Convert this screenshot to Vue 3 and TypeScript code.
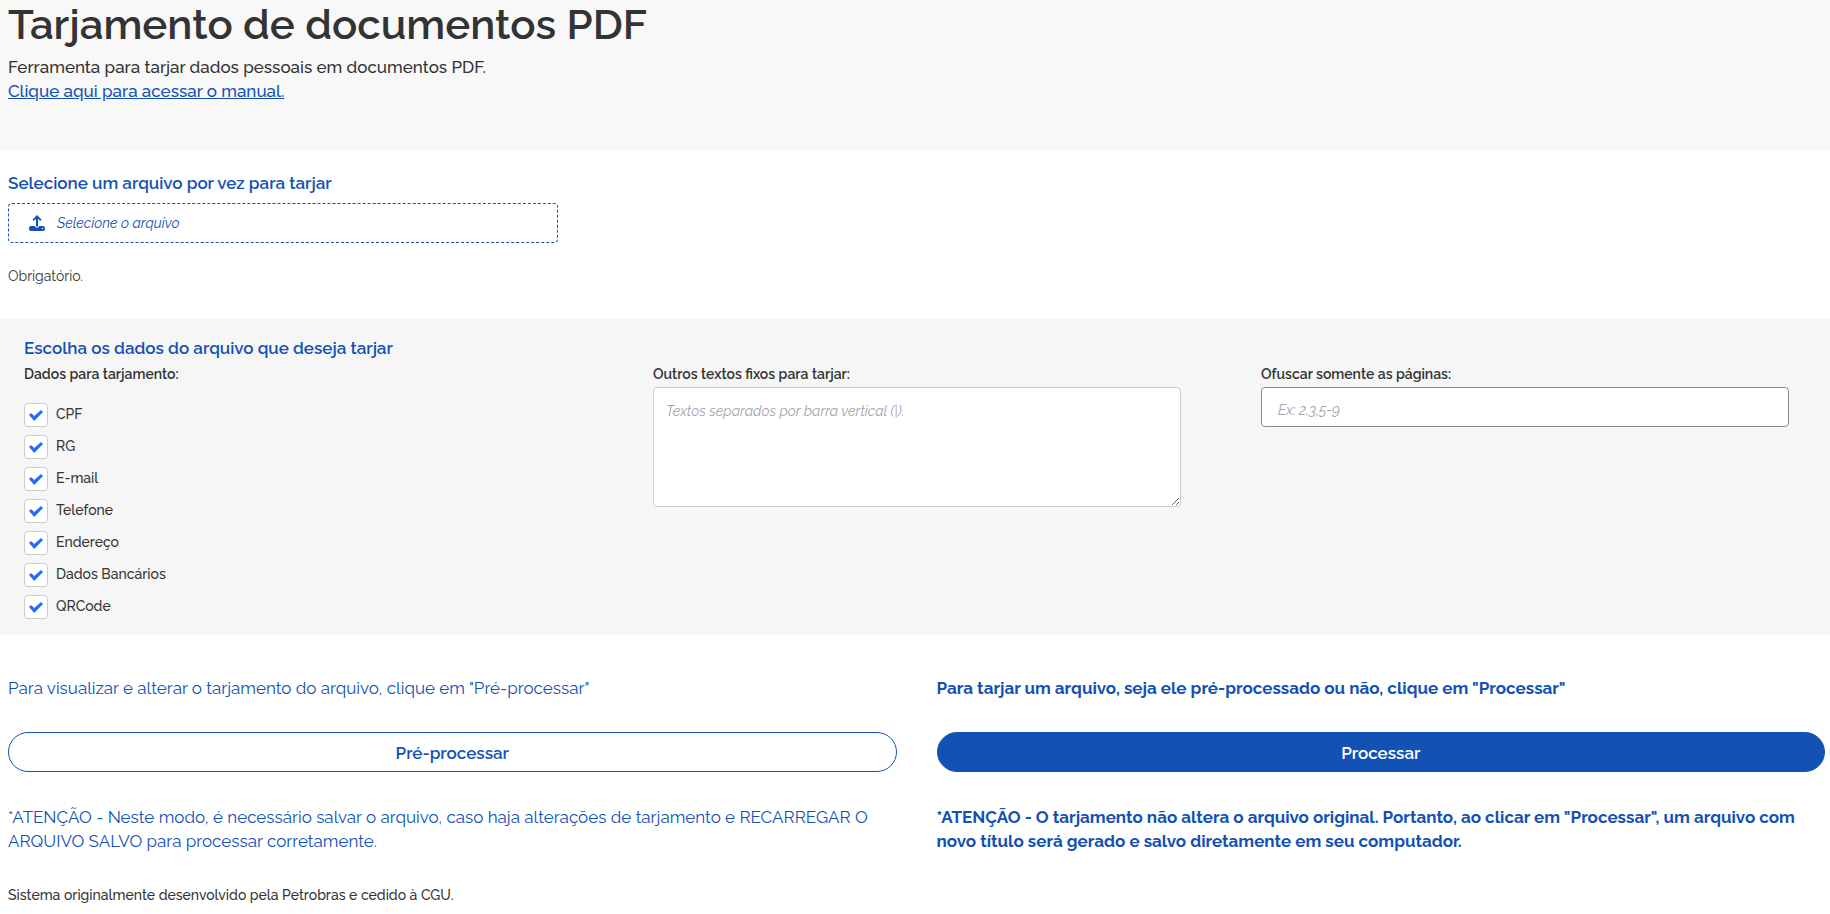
<script setup lang="ts">
import { ref } from 'vue'

interface Option {
  id: string
  label: string
}

const options: Option[] = [
  { id: 'cpf', label: 'CPF' },
  { id: 'rg', label: 'RG' },
  { id: 'email', label: 'E-mail' },
  { id: 'telefone', label: 'Telefone' },
  { id: 'endereco', label: 'Endereço' },
  { id: 'bancarios', label: 'Dados Bancários' },
  { id: 'qrcode', label: 'QRCode' },
]

const selected = ref<string[]>(options.map((o) => o.id))
const fixedTexts = ref('')
const pages = ref('')
const picker = ref<HTMLInputElement | null>(null)
</script>

<template>
  <main class="page">
    <header class="header">
      <h1>Tarjamento de documentos PDF</h1>
      <p>Ferramenta para tarjar dados pessoais em documentos PDF.</p>
      <p><a href="#manual">Clique aqui para acessar o manual.</a></p>
    </header>

    <section class="file">
      <h2 id="file-title">Selecione um arquivo por vez para tarjar</h2>
      <input ref="picker" type="file" accept="application/pdf" hidden />
      <button class="upload" type="button" aria-describedby="file-title" @click="picker?.click()">
        <svg viewBox="0 0 16 16" aria-hidden="true">
          <path d="M8 0 L12.5 4.5 L11.3 5.9 L9 3.8 V11.500 H7 V3.8 L4.7 5.9 L3.5 4.5 Z" />
          <path
            fill-rule="evenodd"
            d="M2 11 H5.8 A2.3 2.3 0 0 0 10.200 11 H14 A2 2 0 0 1 16 13 V14 A2 2 0 0 1 14 16 H2 A2 2 0 0 1 0 14 V13 A2 2 0 0 1 2 11 Z M13.500 12.800 A.7 .7 0 1 0 13.500 14.200 A.7 .7 0 1 0 13.500 12.800 Z"
          />
        </svg>
        <span>Selecione o arquivo</span>
      </button>
      <p class="hint">Obrigatório.</p>
    </section>

    <section class="data">
      <h2>Escolha os dados do arquivo que deseja tarjar</h2>
      <div class="columns">
        <fieldset class="column">
          <legend class="caption">Dados para tarjamento:</legend>
          <div class="options">
            <label v-for="o in options" :key="o.id" class="option">
              <input v-model="selected" type="checkbox" :value="o.id" />
              <svg class="tick" viewBox="0 0 14 11" aria-hidden="true">
                <path d="M0 5 L2 3 L5.300 6 L12 0 L14 2 L5.300 11 Z" />
              </svg>
              <span>{{ o.label }}</span>
            </label>
          </div>
        </fieldset>
        <div class="column">
          <label class="caption" for="texts">Outros textos fixos para tarjar:</label>
          <textarea
            id="texts"
            v-model="fixedTexts"
            placeholder="Textos separados por barra vertical (|)."
          ></textarea>
        </div>
        <div class="column">
          <label class="caption" for="pages">Ofuscar somente as páginas:</label>
          <input id="pages" v-model="pages" type="text" placeholder="Ex: 2,3,5-9" />
        </div>
      </div>
    </section>

    <section class="actions">
      <div class="action">
        <p>Para visualizar e alterar o tarjamento do arquivo, clique em "Pré-processar"</p>
        <button type="button">Pré-processar</button>
        <p>
          *ATENÇÃO - Neste modo, é necessário salvar o arquivo, caso haja alterações de tarjamento e
          RECARREGAR O ARQUIVO SALVO para processar corretamente.
        </p>
      </div>
      <div class="action primary">
        <p>Para tarjar um arquivo, seja ele pré-processado ou não, clique em "Processar"</p>
        <button type="button">Processar</button>
        <p>
          *ATENÇÃO - O tarjamento não altera o arquivo original. Portanto, ao clicar em "Processar",
          um arquivo com novo título será gerado e salvo diretamente em seu computador.
        </p>
      </div>
    </section>

    <footer class="footer">Sistema originalmente desenvolvido pela Petrobras e cedido à CGU.</footer>
  </main>
</template>

<style>
body {
  margin: 0;
  background: #fff;
}
</style>

<style scoped>
.page {
  --blue: #1351b4;
  color: #333;
  font-family: Raleway, Lato, 'Open Sans', sans-serif;
  font-size: 14px;
  font-weight: 500;
  line-height: 24px;
}

h1,
h2,
p {
  margin: 0;
}

h2 {
  color: var(--blue);
  font-size: 17px;
  font-weight: 600;
  line-height: 24px;
}

button,
input,
textarea {
  box-sizing: border-box;
  font-family: inherit;
  font-variant-numeric: lining-nums;
}

.header {
  padding: 0 8px 47px;
  background: #f8f8f8;
  font-size: 17px;
}

.header h1 {
  padding-bottom: 5px;
  font-size: 42px;
  font-weight: 600;
  line-height: 50px;
}

.header a {
  color: var(--blue);
}

.file {
  padding: 21px 8px 31px;
}

.upload {
  display: flex;
  align-items: center;
  gap: 12px;
  width: 550px;
  max-width: 100%;
  height: 40px;
  margin: 8px 0 21px;
  padding: 0 20px;
  border: 1px dashed var(--blue);
  border-radius: 4px;
  background: #fff;
  color: var(--blue);
  font-size: 14px;
  font-style: italic;
  font-weight: 400;
}

.upload svg {
  width: 16px;
  height: 16px;
  fill: currentColor;
}

.hint {
  font-weight: 400;
}

.data {
  padding: 17px 41px 16px 24px;
  background: #f6f6f6;
}

.columns {
  display: grid;
  grid-template-columns: 549fr 528fr 528fr;
  column-gap: 80px;
}

.column {
  display: flex;
  flex-direction: column;
  min-width: 0;
  margin: 0;
  padding: 0;
  border: 0;
}

.caption {
  padding: 2px 0 1px;
  font-weight: 600;
}

.options {
  display: flex;
  flex-direction: column;
  gap: 8px;
  padding-top: 16px;
}

.option {
  display: grid;
  grid-template-columns: 24px auto;
  justify-content: start;
  align-items: center;
  column-gap: 8px;
}

.option span {
  line-height: 22px;
  padding-bottom: 2px;
}

.option input,
.tick {
  grid-area: 1 / 1;
}

.option input {
  width: 24px;
  height: 24px;
  margin: 0;
  appearance: none;
  border: 1px solid #ccc;
  border-radius: 4px;
  background: #fff;
}

.tick {
  width: 14px;
  height: 11px;
  justify-self: center;
  visibility: hidden;
  fill: #2670e8;
  pointer-events: none;
}

.option input:checked + .tick {
  visibility: visible;
}

.column textarea,
.column input[type='text'] {
  width: 100%;
  border: 1px solid #ccc;
  border-radius: 4px;
  background: #fff;
  color: #333;
  font-size: 14px;
  line-height: 22px;
}

.column textarea {
  height: 120px;
  padding: 12px;
  resize: both;
}

.column input[type='text'] {
  height: 40px;
  padding: 6px 16px 0;
  border-color: #888;
}

.column ::placeholder {
  color: #a0a3ad;
  font-style: italic;
  opacity: 1;
}

.actions {
  display: grid;
  grid-template-columns: 1fr 1fr;
  column-gap: 40px;
  padding: 41px 5px 30px 8px;
}

.action {
  color: var(--blue);
  font-size: 17px;
  font-weight: 400;
}

.action button {
  width: 100%;
  height: 40px;
  margin: 32px 0 33px;
  padding: 2px 16px 0;
  border: 1px solid var(--blue);
  border-radius: 20px;
  background: #fff;
  color: var(--blue);
  font-size: 17px;
  font-weight: 600;
}

.action.primary {
  font-weight: 700;
}

.primary button {
  background: var(--blue);
  color: #fff;
}

.footer {
  padding: 0 8px 7px;
}
</style>
